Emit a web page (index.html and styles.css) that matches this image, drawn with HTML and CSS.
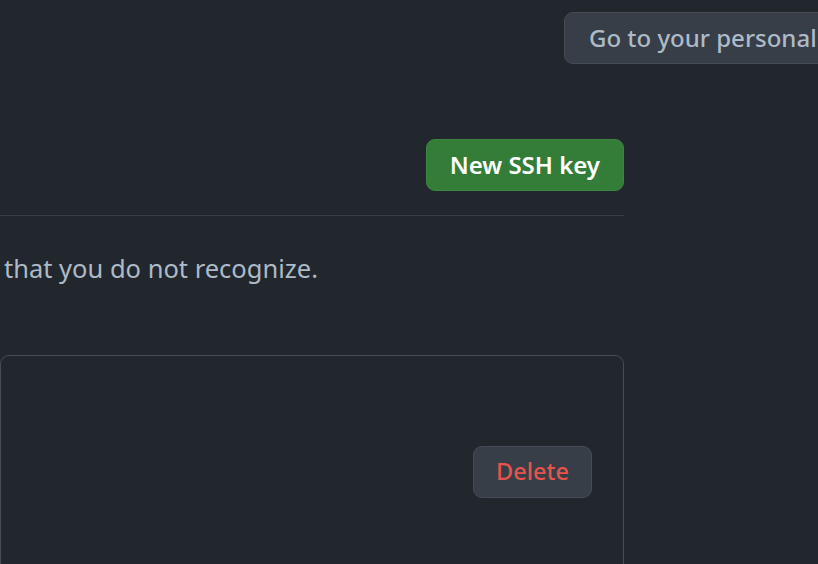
FILE: index.html
```html
<!DOCTYPE html>
<html lang="en">
<head>
<meta charset="utf-8">
<title>SSH keys</title>
<link rel="stylesheet" href="styles.css">
</head>
<body>
<div class="page">
  <div class="topbar">
    <a class="btn btn-default" href="#">Go to your personal profile</a>
  </div>
  <div class="main">
    <div class="subhead">
      <a class="btn btn-primary" href="#">New SSH key</a>
    </div>
    <p class="note">that you do not recognize.</p>
    <div class="box">
      <div class="box-row">
        <button class="btn btn-default btn-danger" type="button">Delete</button>
      </div>
    </div>
  </div>
</div>
</body>
</html>
```

FILE: styles.css
```css
* { box-sizing: border-box; }
html, body {
  margin: 0;
  padding: 0;
  background: #22272e;
}
body {
  font-family: "Noto Sans", "Open Sans", sans-serif;
  font-size: 25.5px;
  color: #adbac7;
}
.page {
  width: 818px;
  height: 564px;
  overflow: hidden;
}
.topbar {
  display: flex;
  padding: 12px 0 0 564px;
  white-space: nowrap;
}
.btn {
  display: inline-flex;
  align-items: center;
  justify-content: center;
  height: 52px;
  padding: 0 24px;
  border-radius: 9px;
  border: 1px solid #444c56;
  font-family: inherit;
  font-size: 24px;
  font-weight: 500;
  line-height: 1;
  text-decoration: none;
  white-space: nowrap;
  cursor: pointer;
}
.btn-default {
  background: #373e47;
  color: #adbac7;
}
.btn-primary {
  background: #347d39;
  border-color: #3b8640;
  color: #ffffff;
  font-weight: 600;
  padding: 0 23px;
}
.btn-danger {
  color: #e5534b;
  padding: 0 22px;
  font-size: 23.5px;
}
.main {
  width: 624px;
  padding-top: 75px;
}
.subhead {
  display: flex;
  justify-content: flex-end;
  padding-bottom: 24px;
  border-bottom: 1px solid #373e47;
}
.note {
  margin: 0;
  padding: 37px 0 0 4px;
  line-height: 31px;
}
.box {
  margin-top: 71px;
  height: 260px;
  border: 1px solid #444c56;
  border-radius: 9px;
}
.box-row {
  display: flex;
  justify-content: flex-end;
  padding: 90px 31px 0 0;
}
```
